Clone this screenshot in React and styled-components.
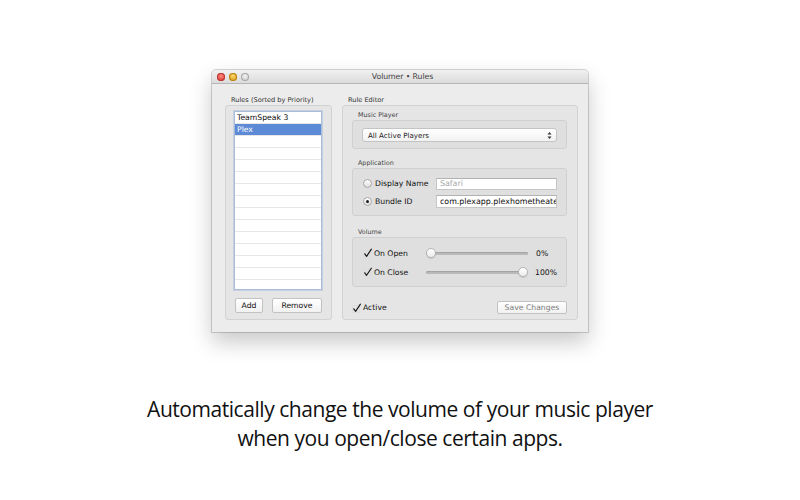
import React from 'react'
import styled, { createGlobalStyle } from 'styled-components'

const uiFont = '"DejaVu Sans", "Liberation Sans", sans-serif'

const GlobalStyle = createGlobalStyle`
  html, body {
    margin: 0;
    padding: 0;
    background: #ffffff;
  }
  * {
    box-sizing: border-box;
  }
`

const Page = styled.div`
  width: 800px;
  height: 500px;
  display: flex;
  flex-direction: column;
  align-items: center;
  padding-top: 70px;
  overflow: hidden;
`

const Window = styled.div`
  width: 376px;
  height: 262px;
  background: #ececec;
  border-radius: 4px 4px 0 0;
  box-shadow: 0 0 0 1px rgba(0, 0, 0, 0.16), 0 10px 22px rgba(0, 0, 0, 0.22);
  display: flex;
  flex-direction: column;
  font-family: ${uiFont};
  color: #111;
`

const TitleBar = styled.div`
  height: 14px;
  flex: none;
  display: grid;
  grid-template-columns: 1fr auto 1fr;
  align-items: center;
  padding-left: 5px;
  border-radius: 4px 4px 0 0;
  background: linear-gradient(#f0f0f0, #dcdcdc);
  border-bottom: 1px solid #b6b6b6;
`

const Lights = styled.div`
  display: flex;
  gap: 4px;
`

const Light = styled.span`
  width: 8px;
  height: 8px;
  border-radius: 50%;
  background: radial-gradient(circle at 50% 35%, ${p => p.$hi} 0%, ${p => p.$color} 70%);
  box-shadow: inset 0 0 0 1px ${p => p.$edge};
`

const Title = styled.div`
  font-size: 7.8px;
  color: #444;
  letter-spacing: -0.1px;
`

const Body = styled.div`
  flex: 1;
  display: flex;
  gap: 10px;
  padding: 12px 10px 12px 13px;
`

const Column = styled.div`
  display: flex;
  flex-direction: column;
  width: ${p => p.$width}px;
`

const ColumnLabel = styled.div`
  height: 9px;
  line-height: 9px;
  font-size: 6.6px;
  color: #333;
  padding-left: ${p => p.$indent}px;
`

const GroupBox = styled.div`
  flex: 1;
  display: flex;
  flex-direction: column;
  background: #e5e5e5;
  border: 1px solid #d2d2d2;
  border-radius: 3px;
  padding: ${p => p.$pad};
`

const List = styled.div`
  height: 179px;
  background: #ffffff;
  border: 1px solid #a9bdd6;
  box-shadow: 0 0 0 1px rgba(140, 170, 215, 0.35);
  overflow: hidden;
`

const Row = styled.div`
  height: 12px;
  line-height: 11px;
  padding-left: 2px;
  font-size: 7.7px;
  border-bottom: 1px solid #e6e6e6;
  background: ${p => (p.$selected ? '#5d8ad6' : '#ffffff')};
  color: ${p => (p.$selected ? '#ffffff' : '#0c0c0c')};
  white-space: nowrap;
`

const ButtonRow = styled.div`
  display: flex;
  gap: 9px;
  margin-top: 8px;
  padding-left: 1px;
`

const PushButton = styled.div`
  width: ${p => p.$width}px;
  height: ${p => p.$height || 15}px;
  display: flex;
  align-items: center;
  justify-content: center;
  font-size: 7.7px;
  color: ${p => (p.$disabled ? '#808080' : '#111')};
  background: linear-gradient(#ffffff, #f1f1f1);
  border: 1px solid #c2c2c2;
  border-radius: 2px;
`

const SubLabel = styled.div`
  height: 9px;
  line-height: 9px;
  font-size: 6.4px;
  color: #444;
  padding-left: 6px;
  margin-top: ${p => p.$top || 0}px;
`

const SubBox = styled.div`
  height: ${p => p.$height}px;
  display: flex;
  flex-direction: column;
  gap: ${p => p.$gap || 0}px;
  background: #dfdfdf;
  border: 1px solid #d0d0d0;
  border-radius: 3px;
  padding: ${p => p.$pad};
`

const Popup = styled.div`
  height: 14px;
  display: flex;
  align-items: center;
  justify-content: space-between;
  padding: 0 4px 0 5px;
  font-size: 7.1px;
  color: #1c1c1c;
  background: linear-gradient(#ffffff, #f2f2f2);
  border: 1px solid #c4c4c4;
  border-radius: 3px;
`

const FieldRow = styled.div`
  height: 13px;
  display: flex;
  align-items: center;
`

const Radio = styled.span`
  width: 9px;
  height: 9px;
  flex: none;
  border-radius: 50%;
  border: 1px solid #a9a9a9;
  background: linear-gradient(#ffffff, #dedede);
  display: flex;
  align-items: center;
  justify-content: center;
  &::after {
    content: '';
    width: 3px;
    height: 3px;
    border-radius: 50%;
    background: ${p => (p.$on ? '#1d1d1d' : 'transparent')};
  }
`

const FieldLabel = styled.span`
  width: 61px;
  margin-left: 3px;
  font-size: 7.7px;
  white-space: nowrap;
`

const TextField = styled.div`
  width: 121px;
  height: ${p => p.$height}px;
  display: flex;
  align-items: center;
  padding-left: 3px;
  font-size: 7.9px;
  color: ${p => (p.$placeholder ? '#a6a6a6' : '#0c0c0c')};
  background: #ffffff;
  border: 1px solid #c6c6c6;
  border-top-color: #b2b2b2;
  white-space: nowrap;
  overflow: hidden;
`

const VolumeRow = styled.div`
  height: 14px;
  display: flex;
  align-items: center;
`

const CheckLabel = styled.span`
  font-size: 7.7px;
  margin-left: 1px;
  width: ${p => (p.$width ? `${p.$width}px` : 'auto')};
  white-space: nowrap;
`

const Slider = styled.div`
  position: relative;
  width: 102px;
  height: 10px;
  display: flex;
  align-items: center;
`

const Track = styled.div`
  width: 100%;
  height: 3px;
  border-radius: 2px;
  background: #b9b9b9;
  box-shadow: inset 0 1px 0 #a4a4a4;
`

const Knob = styled.span`
  position: absolute;
  top: 0;
  width: 10px;
  height: 10px;
  border-radius: 50%;
  background: linear-gradient(#ffffff, #ececec);
  border: 1px solid #b4b4b4;
  box-shadow: 0 1px 1px rgba(0, 0, 0, 0.12);
`

const Percent = styled.span`
  margin-left: 8px;
  font-size: 7.7px;
`

const Footer = styled.div`
  height: 13px;
  margin-top: 14px;
  display: flex;
  align-items: center;
  justify-content: space-between;
`

const CheckWrap = styled.span`
  display: flex;
  align-items: center;
`

const Caption = styled.div`
  margin-top: 63px;
  font-family: "Open Sans", "Noto Sans", sans-serif;
  font-size: 21px;
  line-height: 29px;
  letter-spacing: -0.45px;
  color: #111;
  text-align: center;
`

const Check = () => (
  <svg width="10" height="10" viewBox="0 0 10 10">
    <rect x="0.5" y="2.5" width="7" height="7" rx="1" fill="none" stroke="#d9d9d9" strokeWidth="0.8" />
    <path d="M1.8 5.8 L3.6 8.3 L8.4 1.2" fill="none" stroke="#1a1a1a" strokeWidth="1.2" strokeLinecap="round" strokeLinejoin="round" />
  </svg>
)

const Stepper = () => (
  <svg width="5" height="9" viewBox="0 0 5 9">
    <path d="M0.5 3.5 L2.5 1 L4.5 3.5 Z" fill="#333" />
    <path d="M0.5 5.5 L2.5 8 L4.5 5.5 Z" fill="#333" />
  </svg>
)

const rules = ['TeamSpeak 3', 'Plex']

const VolumeSlider = ({ value }) => (
  <Slider>
    <Track />
    <Knob style={{ left: `${(value / 100) * 92}px` }} />
  </Slider>
)

const App = () => {
  const rows = Array.from({ length: 15 }, (_, i) => rules[i] || '')

  return (
    <Page>
      <GlobalStyle />
      <Window>
        <TitleBar>
          <Lights>
            <Light $color="#e0443e" $hi="#ff8b80" $edge="#b73a33" />
            <Light $color="#dea123" $hi="#ffd870" $edge="#b98318" />
            <Light $color="#cfcfcf" $hi="#f2f2f2" $edge="#a9a9a9" />
          </Lights>
          <Title>Volumer • Rules</Title>
          <span />
        </TitleBar>

        <Body>
          <Column $width={107}>
            <ColumnLabel $indent={6}>Rules (Sorted by Priority)</ColumnLabel>
            <GroupBox $pad="5px 9px 5px 8px">
              <List>
                {rows.map((name, i) => (
                  <Row key={i} $selected={i === 1}>{name}</Row>
                ))}
              </List>
              <ButtonRow>
                <PushButton $width={28}>Add</PushButton>
                <PushButton $width={50}>Remove</PushButton>
              </ButtonRow>
            </GroupBox>
          </Column>

          <Column $width={236}>
            <ColumnLabel $indent={6}>Rule Editor</ColumnLabel>
            <GroupBox $pad="5px 10px 5px 9px">
              <SubLabel>Music Player</SubLabel>
              <SubBox $height={29} $pad="7px 9px 0 9px">
                <Popup>
                  <span>All Active Players</span>
                  <Stepper />
                </Popup>
              </SubBox>

              <SubLabel $top={10}>Application</SubLabel>
              <SubBox $height={48} $gap={5} $pad="8px 9px 0 10px">
                <FieldRow>
                  <Radio />
                  <FieldLabel>Display Name</FieldLabel>
                  <TextField $placeholder $height={12}>Safari</TextField>
                </FieldRow>
                <FieldRow>
                  <Radio $on />
                  <FieldLabel>Bundle ID</FieldLabel>
                  <TextField $height={13}>com.plexapp.plexhometheater</TextField>
                </FieldRow>
              </SubBox>

              <SubLabel $top={12}>Volume</SubLabel>
              <SubBox $height={50} $gap={5} $pad="8px 9px 0 10px">
                <VolumeRow>
                  <Check />
                  <CheckLabel $width={52}>On Open</CheckLabel>
                  <VolumeSlider value={0} />
                  <Percent>0%</Percent>
                </VolumeRow>
                <VolumeRow>
                  <Check />
                  <CheckLabel $width={52}>On Close</CheckLabel>
                  <VolumeSlider value={100} />
                  <Percent>100%</Percent>
                </VolumeRow>
              </SubBox>

              <Footer>
                <CheckWrap>
                  <Check />
                  <CheckLabel>Active</CheckLabel>
                </CheckWrap>
                <PushButton $width={70} $height={13} $disabled>Save Changes</PushButton>
              </Footer>
            </GroupBox>
          </Column>
        </Body>
      </Window>

      <Caption>
        Automatically change the volume of your music player
        <br />
        when you open/close certain apps.
      </Caption>
    </Page>
  )
}

export default App
